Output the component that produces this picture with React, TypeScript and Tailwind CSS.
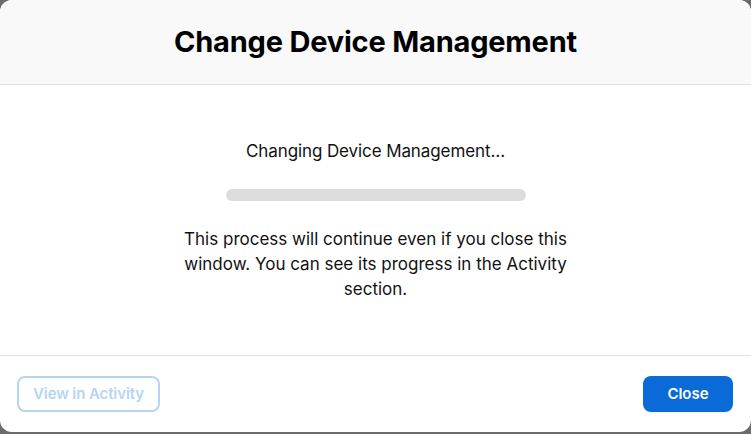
import React from "react";

export default function App() {
  return (
    <div className="w-[751px] h-[434px] bg-[#6b6b6b] overflow-hidden" style={{ fontFamily: "Inter, 'Noto Sans', sans-serif" }}>
      <div className="w-[751px] h-[432px] bg-white rounded-[12px] flex flex-col overflow-hidden">
        <div className="h-[85px] bg-[#f9f9f9] border-b border-[#e3e3e3] flex items-center justify-center">
          <h1 className="text-[29px] font-bold text-black tracking-[-0.2px]">Change Device Management</h1>
        </div>
        <div className="h-[271px] flex flex-col items-center pt-[54px] border-b border-[#e3e3e3]">
          <p className="text-[17px] text-[#111111] leading-[24px] tracking-[-0.1px]">Changing Device Management…</p>
          <div className="w-[300px] h-[12px] rounded-full bg-[#dcdcdc] mt-[26px]"></div>
          <p className="mt-[26px] w-[400px] text-center text-[17px] leading-[25px] text-[#111111]">
            This process will continue even if you close this window. You can see its progress in the Activity section.
          </p>
        </div>
        <div className="flex-1 flex items-start justify-between pl-[17px] pr-[18px] pt-[20px]">
          <button className="h-[36px] px-[14px] rounded-[8px] border-2 border-[#b5d5f5] text-[#b5d5f5] text-[15px] font-semibold tracking-[-0.1px]">View in Activity</button>
          <button className="h-[36px] w-[90px] rounded-[8px] bg-[#0a6ad8] text-white text-[15px] font-semibold">Close</button>
        </div>
      </div>
    </div>
  );
}
